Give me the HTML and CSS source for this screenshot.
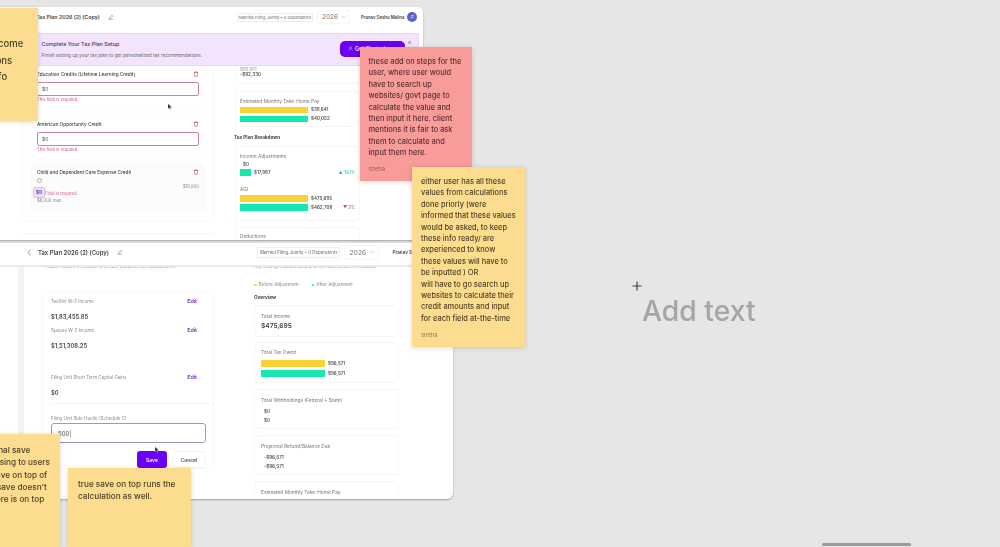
FILE: index.html
```html
<!DOCTYPE html>
<html lang="en">
<head>
<meta charset="utf-8">
<title>Tax Plan board</title>
<link rel="stylesheet" href="styles.css">
</head>
<body>
<main class="board">

  <section class="win win-a">
    <header class="head head-a">
      <span class="title">Tax Plan 2026 (2) (Copy)</span>
      <svg class="pen" viewBox="0 0 10 10"><path d="M2 8l.4-2L6.600 1.800l1.600 1.600L4 7.600zM1.500 9h7"/></svg>
      <span class="chip">Married Filing Jointly • 0 Dependents</span>
      <span class="year">2026<svg class="chev" viewBox="0 0 6 4"><path d="M1 1l2 2 2-2"/></svg></span>
      <span class="user">Pranav Seshu Malina</span>
      <span class="avatar">P</span>
    </header>
    <div class="banner">
      <div class="banner-text">
        <h2>Complete Your Tax Plan Setup</h2>
        <p>Finish setting up your tax plan to get personalized tax recommendations.</p>
      </div>
      <button class="cta"><svg viewBox="0 0 10 10"><circle cx="5" cy="3.200" r="1.800"/><path d="M1.800 9c0-2 1.400-3 3.200-3s3.200 1 3.200 3"/></svg>Get Started</button>
      <span class="close">×</span>
    </div>
    <div class="cols-a">
      <div class="left-a">
        <div class="outer">
          <div class="credit">
            <div class="credit-head"><span>Education Credits (Lifetime Learning Credit)</span><svg class="trash" viewBox="0 0 10 10"><path d="M1.500 2.500h7M3.800 2.500V1.200h2.400v1.300M2.500 2.500l.4 6.300h4.200l.4-6.300"/></svg></div>
            <div class="field bad">$0</div>
            <div class="err">This field is required.</div>
          </div>
          <div class="credit">
            <div class="credit-head"><span>American Opportunity Credit</span><svg class="trash" viewBox="0 0 10 10"><path d="M1.500 2.500h7M3.800 2.500V1.200h2.400v1.300M2.500 2.500l.4 6.300h4.200l.4-6.300"/></svg></div>
            <div class="field bad">$0</div>
            <div class="err">This field is required.</div>
          </div>
          <div class="credit credit-slider">
            <div class="credit-head"><span>Child and Dependent Care Expense Credit</span><svg class="trash" viewBox="0 0 10 10"><path d="M1.500 2.500h7M3.800 2.500V1.200h2.400v1.300M2.500 2.500l.4 6.300h4.200l.4-6.300"/></svg></div>
            <span class="knob"></span>
            <div class="max-val">$16,000</div>
            <div class="err err-s">Field is required.</div>
            <div class="hint">$8,000 max</div>
            <span class="bubble">$0</span>
          </div>
        </div>
        <div class="rule-a"></div>
      </div>
      <div class="right-a">
        <div class="card card-frag">
          <div class="amt">$92,811</div>
          <div class="amt">-$92,330</div>
        </div>
        <div class="card card-pay">
          <div class="lab">Estimated Monthly Take-Home Pay</div>
          <div class="bar-row"><i class="bar yellow"></i><b>$39,641</b></div>
          <div class="bar-row"><i class="bar teal"></i><b>$40,052</b></div>
        </div>
        <h3 class="sec">Tax Plan Breakdown</h3>
        <div class="card card-break">
          <div class="lab">Income Adjustments</div>
          <div class="amt zero">$0</div>
          <div class="bar-row"><i class="bar teal short"></i><b>$17,987</b><em class="up">▲ 100%</em></div>
          <div class="lab lab-agi">AGI</div>
          <div class="bar-row"><i class="bar yellow"></i><b>$475,695</b></div>
          <div class="bar-row"><i class="bar teal"></i><b>$462,708</b><em class="down">▼ 3%</em></div>
        </div>
        <div class="card card-ded"><div class="lab">Deductions</div></div>
      </div>
    </div>
  </section>

  <section class="win win-b">
    <header class="head head-b">
      <svg class="back" viewBox="0 0 6 10"><path d="M4.500 1L1 5l3.500 4"/></svg>
      <span class="title">Tax Plan 2026 (2) (Copy)</span>
      <svg class="pen" viewBox="0 0 10 10"><path d="M2 8l.4-2L6.600 1.800l1.600 1.600L4 7.600zM1.500 9h7"/></svg>
      <span class="chip">Married Filing Jointly • 0 Dependents</span>
      <span class="year">2026<svg class="chev" viewBox="0 0 6 4"><path d="M1 1l2 2 2-2"/></svg></span>
      <span class="user">Pranav Seshu Malina</span>
    </header>
    <div class="cols-b">
      <div class="left-b">
        <div class="clip-line">Adjust values if needed to ensure accurate tax calculations.</div>
        <div class="inc-card">
          <div class="inc-row"><span>Taxfiler W-2 Income</span><a>Edit</a></div>
          <div class="inc-val">$1,83,455.85</div>
          <div class="inc-row"><span>Spouse W-2 Income</span><a>Edit</a></div>
          <div class="inc-val">$1,51,308.25</div>
          <div class="inc-row gap"><span>Filing Unit Short Term Capital Gains</span><a>Edit</a></div>
          <div class="inc-val">$0</div>
          <div class="inc-rule"></div>
          <div class="inc-row"><span>Filing Unit Side Hustle (Schedule C)</span></div>
          <div class="field edit">500|</div>
          <div class="actions"><button class="save">Save</button><button class="cancel">Cancel</button></div>
        </div>
      </div>
      <div class="right-b">
        <div class="clip-line">Key changes based data and the rules below it included.</div>
        <div class="legend"><span><i class="dot yellow"></i>Before Adjustment</span><span><i class="dot teal"></i>After Adjustment</span></div>
        <h3 class="sec sec-b">Overview</h3>
        <div class="card ov-1"><div class="lab">Total Income</div><div class="big">$475,695</div></div>
        <div class="card ov-2">
          <div class="lab">Total Tax Owed</div>
          <div class="bar-row"><i class="bar yellow b2"></i><b>$96,571</b></div>
          <div class="bar-row"><i class="bar teal b2"></i><b>$96,571</b></div>
        </div>
        <div class="card ov-3"><div class="lab">Total Withholdings (Federal + State)</div><div class="amt in">$0</div><div class="amt in">$0</div></div>
        <div class="card ov-3"><div class="lab">Projected Refund/Balance Due</div><div class="amt in">-$96,571</div><div class="amt in">-$96,571</div></div>
        <div class="card ov-3"><div class="lab">Estimated Monthly Take-Home Pay</div></div>
      </div>
    </div>
  </section>

  <svg class="cursor cur-a" viewBox="0 0 8 12"><path d="M1 1v8l2-2 1.500 3 1-.5L4 6.800h3z"/></svg>
  <svg class="cursor cur-b" viewBox="0 0 8 12"><path d="M1 1v8l2-2 1.500 3 1-.5L4 6.800h3z"/></svg>

  <article class="note yellow-n n-tl"><p>or<br>income<br>tions<br>info</p></article>
  <article class="note red-n n-red">
    <p>these add on steps for the<br>user, where user would<br>have to search up<br>websites/ govt page to<br>calculate the value and<br>then input it here. client<br>mentions it is fair to ask<br>them to calculate and<br>input them here.</p>
    <footer>sneha</footer>
  </article>
  <article class="note yellow-n n-big">
    <p>either user has all these<br>values from calculations<br>done priorly (were<br>informed that these values<br>would be asked, to keep<br>these info ready/ are<br>experienced to know<br>these values will have to<br>be inputted ) OR<br>will have to go search up<br>websites to calculate their<br>credit amounts and input<br>for each field at-the-time</p>
    <footer>sneha</footer>
  </article>
  <article class="note yellow-n n-bl"><p>Optional save<br>confusing to users<br>the save on top of<br>their save doesn't<br>as there is on top</p></article>
  <article class="note yellow-n n-bm"><p>true save on top runs the<br>calculation as well.</p></article>

  <div class="add-text">Add text</div>
  <svg class="cross" viewBox="0 0 10 10"><path d="M5 .5v9M.5 5h9"/></svg>
  <div class="scrollbar"></div>
</main>
</body>
</html>
```
FILE: styles.css
```css
* { box-sizing: border-box; }
html, body { margin: 0; height: 100%; }
body { background: #e6e6e6; font-family: Inter, "Liberation Sans", sans-serif; color: #333; overflow: hidden; }
.board { position: relative; width: 1000px; height: 547px; overflow: hidden; }
h2, h3, p { margin: 0; }

.win { position: absolute; background: #fff; overflow: hidden; filter: blur(.35px); box-shadow: 0 1px 2px rgba(0,0,0,.3); }
.win-a { left: -10px; top: 7px; width: 433px; height: 233px; border-radius: 0 6px 3px 0; display: flex; flex-direction: column; }
.win-b { left: -10px; top: 243px; width: 463px; height: 256px; border-radius: 0 0 6px 0; display: flex; flex-direction: column; }

.head { display: flex; align-items: center; flex: none; background: #fff; position: relative; z-index: 2; }
.head-a { height: 26px; padding: 0 0 6px 46px; }
.head-b { height: 24px; padding: 0 0 4px 37px; border-bottom: 2px solid #f1e3f8; }
.title { font-size: 5.300px; font-weight: 600; color: #444; white-space: nowrap; }
.head-b .title { font-size: 5.900px; }
.back { width: 5px; height: 7px; margin-right: 6px; fill: none; stroke: #666; stroke-width: 1; flex: none; }
.pen { width: 6px; height: 6px; margin-left: 8px; fill: none; stroke: #777; stroke-width: .8; flex: none; }
.chip { font-size: 4.100px; color: #666; border: 1px solid #eee; border-radius: 1px; padding: 1px 1px; white-space: nowrap; }
.head-a .chip { margin-left: 123px; }
.head-b .chip { margin-left: 134px; font-size: 4.400px; padding: 2px 2px; }
.year { display: flex; align-items: center; justify-content: space-between; font-size: 6.400px; color: #777; border: 1px solid #f6f6f6; border-radius: 2px; padding: 2px 3px 2px 4px; width: 33px; margin-left: 4px; flex: none; }
.head-b .year { width: 35px; font-size: 6.800px; }
.chev { width: 5px; height: 4px; fill: none; stroke: #aaa; stroke-width: .7; }
.user { font-size: 4.300px; font-weight: 600; color: #444; margin-left: 11px; white-space: nowrap; }
.head-b .user { margin-left: 13px; font-size: 4.600px; }
.avatar { width: 10px; height: 10px; border-radius: 50%; background: #5c62c4; color: #d8daf5; font-size: 5px; display: flex; align-items: center; justify-content: center; margin-left: 3px; flex: none; }

.banner { flex: none; height: 33px; margin-left: 38px; margin-right: 4px; background: #f3e3fc; border: 1px solid #e8d8f2; border-radius: 1px; display: flex; align-items: center; padding-left: 12.500px; position: relative; z-index: 2; }
.banner-text { flex: 1; }
.banner h2 { font-size: 5.400px; font-weight: 500; color: #444; margin-bottom: 5px; }
.banner p { font-size: 4.700px; color: #666; }
.cta { display: flex; align-items: center; gap: 2px; height: 16px; width: 65px; padding: 0 0 0 8px; border: 0; border-radius: 5px; background: #6a00f4; color: #fff; font: 500 5.500px Inter, sans-serif; margin-right: 13px; margin-top: -2px; }
.cta svg { width: 5px; height: 5px; fill: none; stroke: #e7d4ff; stroke-width: .9; }
.close { position: absolute; right: 6px; top: 3px; font-size: 7px; color: #8b7a9a; }

.cols-a { flex: 1; display: flex; margin-top: -2px; min-height: 0; }
.left-a { width: 224px; flex: none; padding-left: 32px; }
.outer { border: 1px solid #f8f8f8; border-top: 0; border-radius: 0 0 6px 6px; width: 192px; height: 158px; padding: 0 8px 0 8px; display: flex; flex-direction: column; gap: 5.500px; }
.credit { position: relative; height: 44px; padding: 7px 6px 5px; background: #fff; border-radius: 5px; box-shadow: 0 0 2px rgba(0,0,0,.06); flex: none; }
.credit-head { display: flex; justify-content: space-between; align-items: center; height: 6px; font-size: 4.700px; font-weight: 500; color: #444; white-space: nowrap; }
.trash { width: 6px; height: 6px; fill: none; stroke: #b63a4a; stroke-width: .9; }
.field { border-radius: 2px; background: #fff; font-size: 5px; color: #555; display: flex; align-items: center; padding-left: 4px; }
.bad { height: 14px; margin-top: 5px; border: 1px solid #cf8494; }
.err { font-size: 4.200px; color: #d0607a; margin-top: 1px; line-height: 6px; }
.credit-slider { height: 48px; background: #fcfcfc; padding-top: 6px; }
.knob { display: block; width: 5px; height: 5px; border: .8px solid #aaa; border-radius: 50%; margin: 3px 0 0 0; background: #fff; }
.max-val { text-align: right; font-size: 4.300px; color: #888; line-height: 5px; margin-top: 1px; }
.err-s { margin: 1.500px 0 0 8px; }
.hint { font-size: 4.300px; color: #888; line-height: 6px; margin-top: 1.500px; }
.bubble { position: absolute; left: 2px; top: 24px; width: 12px; height: 11px; background: #eddffa; border: 1px solid #d8c3ee; border-radius: 2px; font-size: 4.500px; font-weight: 700; color: #6a4aa5; display: flex; align-items: center; justify-content: center; }
.rule-a { width: 190px; height: 1px; background: #f4f4f4; margin-top: 11px; }

.right-a { flex: 1; padding-left: 21px; min-width: 0; }
.card { background: #fff; border: 1px solid #f6f6f6; border-radius: 3px; padding: 0 4px; width: 132px; }
.card-frag { height: 20px; padding-top: 3px; border-top: 0; width: 125px; }
.amt { font-size: 4.600px; font-weight: 600; color: #555; line-height: 6px; }
.card-frag .amt:first-child { color: #aaa; font-weight: 500; height: 5px; overflow: hidden; }
.card-pay { height: 36px; margin-top: 7px; width: 125px; padding-top: 6px; }
.lab { font-size: 4.800px; color: #777; line-height: 6px; }
.bar-row { display: flex; align-items: center; height: 6.500px; margin-top: 2.500px; gap: 3px; white-space: nowrap; }
.bar-row b { font-size: 4.500px; font-weight: 600; color: #555; }
.bar-row em { margin-left: auto; font-style: normal; font-size: 4.200px; }
.up { color: #19c79c; }
.down { color: #c94560; }
.bar { display: block; width: 68px; height: 100%; flex: none; }
.yellow { background: #f9d235; }
.teal { background: #18e7b1; }
.sec { font-size: 4.700px; font-weight: 700; color: #444; line-height: 6px; }
.right-a .sec { margin: 7px 0 6px -1px; }
.card-break { height: 75px; width: 125px; padding-top: 6px; }
.zero { margin: 2.500px 0 0 3px; }
.short { width: 11px; }
.zero + .bar-row { margin-top: 1.500px; }
.lab-agi { margin-top: 10px; }
.lab-agi + .bar-row { margin-top: 3.500px; }
.card-ded { height: 30px; width: 125px; margin-top: 6px; padding-top: 5px; }

.cols-b { flex: 1; display: flex; min-height: 0; position: relative; }
.clip-line { font-size: 4.600px; color: #999; height: 3px; line-height: 0; white-space: nowrap; overflow: hidden; }
.left-b { width: 222px; flex: none; margin-left: 28px; border-left: 6px solid #f3f3f3; padding-left: 18px; }
.left-b .clip-line { padding-left: 4px; }
.inc-card { width: 172px; margin-top: 22px; padding: 5px 8px 0 8px; border: 1px solid #f8f8f8; border-radius: 3px; }
.inc-row { display: flex; justify-content: space-between; align-items: center; font-size: 4.500px; color: #888; height: 6px; padding-right: 8px; white-space: nowrap; }
.inc-row a { font-size: 5.200px; font-weight: 700; color: #7b3fc4; }
.inc-val { font-size: 5.800px; font-weight: 600; color: #444; margin-top: 9px; line-height: 7px; margin-bottom: 7px; }
.inc-row.gap { margin-top: 25px; }
.inc-rule { height: 1px; background: #f4f4f4; margin: 0 -9px 0 0; }
.inc-rule + .inc-row { margin-top: 11px; }
.field.edit { height: 20px; margin-top: 2px; border: 1px solid #a398b3; border-radius: 3px; font-size: 6px; padding-left: 6px; width: 155px; color: #444; }
.actions { display: flex; justify-content: flex-end; gap: 5px; margin-top: 8px; width: 155px; }
.actions button { font: 600 5px Inter, sans-serif; height: 17px; border-radius: 3px; padding: 0; }
.save { width: 30px; background: #6a00f4; color: #fff; border: 0; }
.cancel { width: 34px; background: #fff; color: #555; border: 1px solid #f4f4f4; }

.right-b { flex: 1; min-width: 0; padding-left: 14px; }
.legend { display: flex; gap: 13px; margin-top: 12px; font-size: 4.600px; color: #888; line-height: 6px; }
.legend span { display: flex; align-items: center; gap: 2px; }
.dot { width: 2.500px; height: 2.500px; border-radius: 50%; }
.sec-b { margin: 5.500px 0 5px 0; }
.right-b .card { width: 145px; padding: 0 6px; }
.ov-1 { height: 32px; padding-top: 7px !important; }
.big { font-size: 6.600px; font-weight: 600; color: #444; margin-top: 3px; line-height: 9px; }
.ov-2 { height: 41px; margin-top: 5px; padding-top: 6px !important; }
.ov-2 .bar-row { height: 7px; }
.ov-2 .lab + .bar-row { margin-top: 5.500px; }
.b2 { width: 64px; }
.ov-3 { height: 40px; margin-top: 6px; padding-top: 7px !important; }
.in { margin-left: 3px; margin-top: 3px; }
.lab + .in { margin-top: 6px; }

.note { position: absolute; overflow: hidden; box-shadow: 0 1px 5px rgba(0,0,0,.16); filter: blur(.3px); }
.yellow-n { background: #fcdc8e; color: #4f4227; }
.red-n { background: #f89c9a; color: #5c2f33; }
.note p { font-size: 7.450px; font-weight: 500; line-height: 11.400px; white-space: nowrap; }
.note footer { font-size: 5.800px; opacity: .6; }
.n-red { left: 360px; top: 47px; width: 112px; height: 134px; padding: 9px 0 0 8.500px; }
.n-red footer { margin-top: 6px; }
.n-big { left: 412px; top: 167px; width: 113px; height: 180px; padding: 9px 0 0 9px; }
.n-big footer { margin-top: 7px; }
.n-tl { left: -40px; top: 8px; width: 78px; height: 113px; padding: 11px 0 0 30px; }
.n-tl p { font-size: 9.500px; line-height: 16.800px; }
.n-bl { left: -40px; top: 434px; width: 100px; height: 113px; padding: 10px 0 0 17px; }
.n-bl p { font-size: 8.200px; line-height: 12.300px; }
.n-bm { left: 68px; top: 468px; width: 123px; height: 79px; padding: 10px 0 0 10px; }
.n-bm p { font-size: 8.200px; line-height: 12.300px; }

.cursor { position: absolute; width: 6px; height: 8px; fill: #222; stroke: #fff; stroke-width: .4; }
.cur-a { left: 167px; top: 103px; }
.cur-b { left: 154px; top: 446px; }

.add-text { position: absolute; left: 642px; top: 293px; font-size: 28.300px; font-weight: 500; line-height: 36px; color: #a5a5a5; filter: blur(.3px); white-space: nowrap; }
.cross { position: absolute; left: 632px; top: 281px; width: 10px; height: 10px; fill: none; stroke: #3a3a3a; stroke-width: 1.100; }
.scrollbar { position: absolute; left: 822px; top: 543px; width: 89px; height: 3px; background: #9a9a9a; border-radius: 2px; }
```
